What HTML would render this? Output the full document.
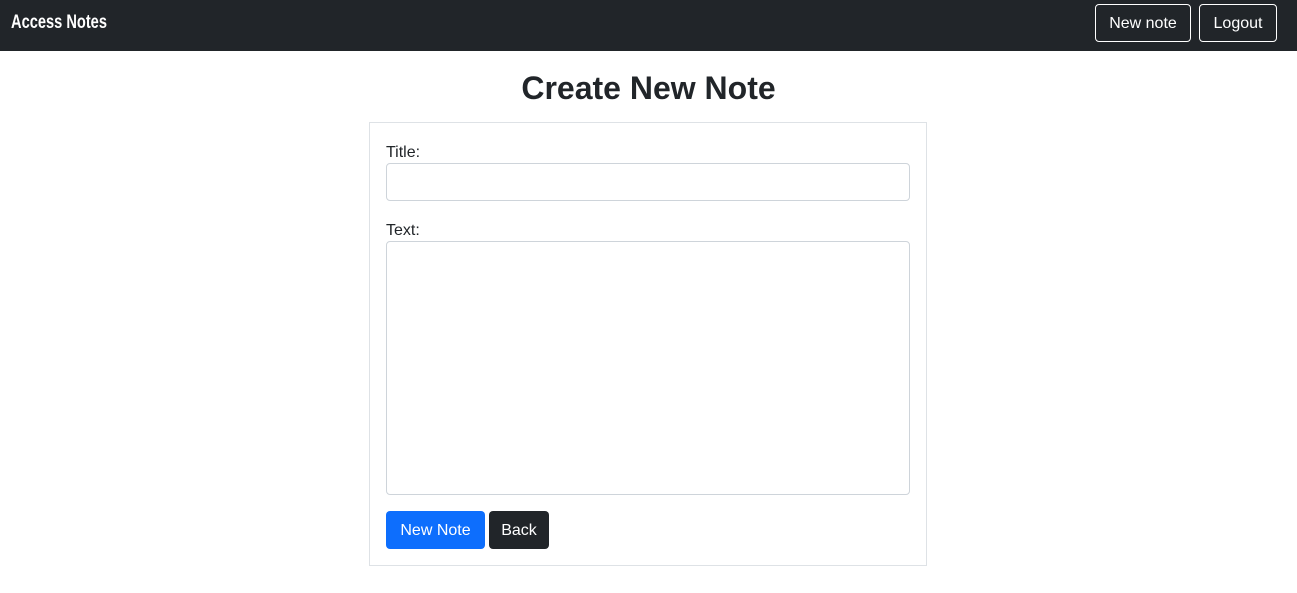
<!DOCTYPE html>
<html><head><style>
*{box-sizing:border-box;margin:0;padding:0}
body{width:1297px;height:593px;background:#fff;font-family:"Liberation Sans",sans-serif;color:#212529;font-size:16px;position:relative;overflow:hidden}
.nav{position:absolute;left:0;top:0;width:1297px;height:51px;background:#212529}
.brand{position:absolute;left:11px;top:12px;color:#fff;font-weight:bold;font-size:19px;transform:scaleX(0.77);transform-origin:left top;white-space:nowrap}
.nb{position:absolute;top:4px;height:38px;border:1px solid #fff;border-radius:4px;color:#fff;font-size:16px;line-height:38px;text-align:center}
h1{position:absolute;left:0;width:1297px;top:69px;text-align:center;font-size:32px;font-weight:bold;line-height:38px}
.card{position:absolute;left:369px;top:122px;width:558px;height:444px;border:1px solid #dee2e6}
.lbl{position:absolute;left:386px;font-size:16px}
.inp{position:absolute;left:386px;width:524px;border:1px solid #ced4da;border-radius:4px}
.btn{position:absolute;top:511px;height:38px;border-radius:4px;color:#fff;line-height:40px;text-align:center;font-size:16px}
</style></head><body>
<div class="nav"><div class="brand">Access Notes</div>
<div class="nb" style="left:1095px;width:96px">New note</div>
<div class="nb" style="left:1199px;width:78px">Logout</div></div>
<h1>Create New Note</h1>
<div class="card"></div>
<div class="lbl" style="top:144px">Title:</div>
<div class="inp" style="top:163px;height:38px"></div>
<div class="lbl" style="top:222px">Text:</div>
<div class="inp" style="top:241px;height:254px"></div>
<div class="btn" style="left:386px;width:99px;background:#0d6efd">New Note</div>
<div class="btn" style="left:489px;width:60px;background:#212529">Back</div>
</body></html>
